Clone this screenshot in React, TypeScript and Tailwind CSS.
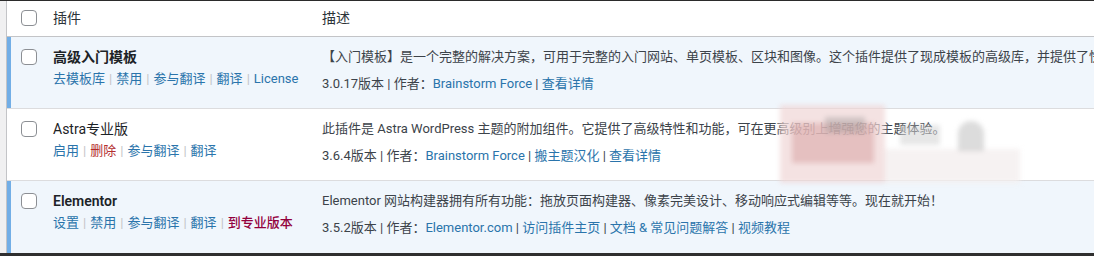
import React from "react";

type TAction = { label: string; tone?: "link" | "danger" | "pro" };
type TPlugin = {
  name: string;
  active: boolean;
  actions: TAction[];
  description: string;
  version: string;
  author: string;
  links: string[];
};

const plugins: TPlugin[] = [
  {
    name: "高级入门模板",
    active: true,
    actions: [
      { label: "去模板库" },
      { label: "禁用" },
      { label: "参与翻译" },
      { label: "翻译" },
      { label: "License" },
    ],
    description:
      "【入门模板】是一个完整的解决方案，可用于完整的入门网站、单页模板、区块和图像。这个插件提供了现成模板的高级库，并提供了快速导入功能。",
    version: "3.0.17版本",
    author: "Brainstorm Force",
    links: ["查看详情"],
  },
  {
    name: "Astra专业版",
    active: false,
    actions: [
      { label: "启用" },
      { label: "删除", tone: "danger" },
      { label: "参与翻译" },
      { label: "翻译" },
    ],
    description:
      "此插件是 Astra WordPress 主题的附加组件。它提供了高级特性和功能，可在更高级别上增强您的主题体验。",
    version: "3.6.4版本",
    author: "Brainstorm Force",
    links: ["搬主题汉化", "查看详情"],
  },
  {
    name: "Elementor",
    active: true,
    actions: [
      { label: "设置" },
      { label: "禁用" },
      { label: "参与翻译" },
      { label: "翻译" },
      { label: "到专业版本", tone: "pro" },
    ],
    description:
      "Elementor 网站构建器拥有所有功能：拖放页面构建器、像素完美设计、移动响应式编辑等等。现在就开始！",
    version: "3.5.2版本",
    author: "Elementor.com",
    links: ["访问插件主页", "文档 & 常见问题解答", "视频教程"],
  },
];

const Checkbox = () => (
  <span className="block w-[16px] h-[16px] rounded-[4px] border border-[#8c8f94] bg-white" />
);

const toneClass = (tone?: TAction["tone"]) => {
  if (tone === "danger") return "text-[#b32d2e]";
  if (tone === "pro") return "text-[#93003c] font-medium";
  return "text-[#2a74ab]";
};

const PluginRow = ({ plugin, last }: { plugin: TPlugin; last: boolean }) => (
  <div
    className={`flex h-[72px] ${plugin.active ? "bg-[#f0f6fc]" : "bg-white"} ${
      last ? "" : "border-b border-[#dcdcde]"
    }`}
  >
    {/* active marker */}
    <div className={`w-[4px] shrink-0 ${plugin.active ? "bg-[#72aee6]" : ""}`} />
    <div className="w-[42px] shrink-0 pl-[10px] pt-[12px]">
      <Checkbox />
    </div>
    <div className="w-[269px] shrink-0 pt-[10px]">
      <div
        className={`text-[14px] leading-[20px] text-[#1d2327] ${
          plugin.active ? "font-semibold" : ""
        }`}
      >
        {plugin.name}
      </div>
      <div className="mt-[2px] flex items-center text-[13px] leading-[20px] whitespace-nowrap">
        {plugin.actions.map((a, i) => (
          <React.Fragment key={a.label}>
            {i > 0 && <span className="mx-[4px] text-[#c3c4c7]">|</span>}
            <span className={toneClass(a.tone)}>{a.label}</span>
          </React.Fragment>
        ))}
      </div>
    </div>
    <div className="flex-1 min-w-0 pt-[10px] text-[13px] leading-[20px] text-[#3c434a] whitespace-nowrap">
      <div>{plugin.description}</div>
      <div className="mt-[7px]">
        {plugin.version} | 作者：<span className="text-[#2a74ab]">{plugin.author}</span>
        {plugin.links.map((l) => (
          <React.Fragment key={l}>
            {" | "}
            <span className="text-[#2a74ab]">{l}</span>
          </React.Fragment>
        ))}
      </div>
    </div>
  </div>
);

export default function App() {
  return (
    <div
      className="relative w-[1094px] h-[256px] overflow-hidden bg-[#f0f0f1] flex flex-col border-t border-[#2b2b2b]"
      style={{ fontFamily: 'Roboto, "Noto Sans CJK SC", sans-serif' }}
    >
      <div className="flex-1 pl-[6px] min-h-0">
        <div className="h-full w-[1200px] bg-white border-l border-[#c3c4c7] flex flex-col">
          {/* header */}
          <div className="flex h-[36px] shrink-0 border-b border-[#c3c4c7] bg-white">
            <div className="w-[4px] shrink-0" />
            <div className="w-[42px] shrink-0 pl-[10px] pt-[9px]">
              <Checkbox />
            </div>
            <div className="w-[269px] shrink-0 pt-[7px] text-[14px] leading-[20px] text-[#2c3338]">
              插件
            </div>
            <div className="flex-1 pt-[7px] text-[14px] leading-[20px] text-[#2c3338]">描述</div>
          </div>
          {plugins.map((p, i) => (
            <PluginRow key={p.name} plugin={p} last={i === plugins.length - 1} />
          ))}
        </div>
      </div>
      <div className="h-[3px] shrink-0 bg-[#2f2f2f]" />

      {/* pixelated mosaic patch over the second row */}
      <div className="absolute left-[780px] top-[104px] w-[240px] h-[78px] pointer-events-none blur-[2.5px]">
        <div className="absolute left-[0px] top-[0px] w-[105px] h-[78px] bg-[#efd6d6]/70" />
        <div className="absolute left-[12px] top-[18px] w-[82px] h-[40px] bg-[#d9a5a5]/55" />
        <div className="absolute left-[45px] top-[12px] w-[40px] h-[16px] bg-[#8f8f8f]/35" />
        <div className="absolute left-[105px] top-[44px] w-[135px] h-[34px] bg-[#f4efef]/80" />
        <div className="absolute left-[120px] top-[20px] w-[40px] h-[20px] bg-[#d4d4d4]/55" />
        <div className="absolute left-[178px] top-[16px] w-[26px] h-[30px] rounded-t-full bg-[#c0c0c0]/55" />
      </div>
    </div>
  );
}
